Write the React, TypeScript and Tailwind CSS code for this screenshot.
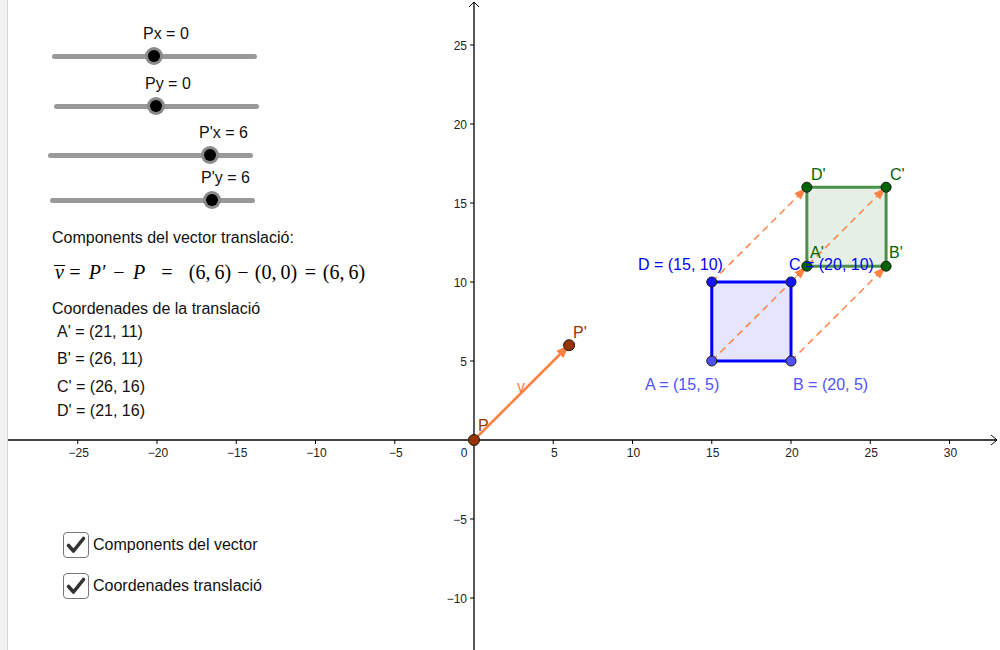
import React from 'react';

// graph coordinates -> page pixels
const OX = 474;
const OY = 440;
const SX = 15.85;
const SY = 15.8;
const X = (u: number) => OX + u * SX;
const Y = (v: number) => OY - v * SY;

const ORANGE = '#ff8244';
const LABEL_FONT = 'Liberation Sans, Arial, sans-serif';

type Pt = [number, number];

function Arrow({ from, to, dashed, width }: { from: Pt; to: Pt; dashed?: boolean; width: number }) {
  const x1 = X(from[0]);
  const y1 = Y(from[1]);
  const x2 = X(to[0]);
  const y2 = Y(to[1]);
  const len = Math.hypot(x2 - x1, y2 - y1);
  const dx = (x2 - x1) / len;
  const dy = (y2 - y1) / len;
  const L = 13;
  const W = dashed ? 4.5 : 5;
  const bx = x2 - dx * L;
  const by = y2 - dy * L;
  const head = `${x2},${y2} ${bx - dy * W},${by + dx * W} ${bx + dy * W},${by - dx * W}`;
  return (
    <g>
      <line
        x1={x1}
        y1={y1}
        x2={bx + dx * 2}
        y2={by + dy * 2}
        stroke={ORANGE}
        strokeWidth={width}
        strokeDasharray={dashed ? '7 5' : undefined}
      />
      <polygon points={head} fill={ORANGE} />
    </g>
  );
}

function Dot({ p, fill, r = 5 }: { p: Pt; fill: string; r?: number }) {
  return <circle cx={X(p[0])} cy={Y(p[1])} r={r} fill={fill} stroke="#1a1a1a" strokeWidth={1} />;
}

function Graph() {
  const xTicks = [-25, -20, -15, -10, -5, 5, 10, 15, 20, 25, 30];
  const yTicks = [-10, -5, 5, 10, 15, 20, 25];
  const A: Pt = [15, 5];
  const B: Pt = [20, 5];
  const C: Pt = [20, 10];
  const D: Pt = [15, 10];
  const A2: Pt = [21, 11];
  const B2: Pt = [26, 11];
  const C2: Pt = [26, 16];
  const D2: Pt = [21, 16];
  const poly = (ps: Pt[]) => ps.map((p) => `${X(p[0])},${Y(p[1])}`).join(' ');

  return (
    <svg className="absolute inset-0" width={992} height={650} viewBox="8 0 992 650">
      {/* axes */}
      <line x1={8} y1={OY} x2={997} y2={OY} stroke="#000" strokeWidth={1.3} />
      <polyline points="991,435 997,440 991,445" fill="none" stroke="#000" strokeWidth={1} />
      <line x1={OX} y1={650} x2={OX} y2={2} stroke="#000" strokeWidth={1.3} />
      <polyline points="469,7 474,2 479,7" fill="none" stroke="#000" strokeWidth={1} />

      {xTicks.map((t) => (
        <g key={'x' + t}>
          <line x1={X(t)} y1={OY} x2={X(t)} y2={OY + 4} stroke="#000" strokeWidth={1} />
          <text x={X(t) + 1} y={457} fontSize={12} fill="#222" textAnchor="middle" fontFamily={LABEL_FONT}>
            {t < 0 ? '\u2212' + Math.abs(t) : t}
          </text>
        </g>
      ))}
      {yTicks.map((t) => (
        <g key={'y' + t}>
          <line x1={OX - 4} y1={Y(t)} x2={OX} y2={Y(t)} stroke="#000" strokeWidth={1} />
          <text x={467} y={Y(t) + 4.5} fontSize={12} fill="#222" textAnchor="end" fontFamily={LABEL_FONT}>
            {t < 0 ? '\u2212' + Math.abs(t) : t}
          </text>
        </g>
      ))}
      <text x={464} y={457} fontSize={12} fill="#222" textAnchor="middle" fontFamily={LABEL_FONT}>
        0
      </text>

      {/* squares */}
      <polygon points={poly([A, B, C, D])} fill="rgba(0,0,255,0.1)" stroke="#0000ff" strokeWidth={3} />
      <polygon points={poly([A2, B2, C2, D2])} fill="rgba(0,100,0,0.1)" stroke="#4b914b" strokeWidth={3} />

      {/* translation vectors */}
      <Arrow from={A} to={A2} dashed width={1.5} />
      <Arrow from={B} to={B2} dashed width={1.5} />
      <Arrow from={C} to={C2} dashed width={1.5} />
      <Arrow from={D} to={D2} dashed width={1.5} />
      <Arrow from={[0, 0]} to={[6, 6]} width={2.6} />

      {/* points */}
      <Dot p={A} fill="#5050ff" />
      <Dot p={B} fill="#5050ff" />
      <Dot p={C} fill="#1515ff" />
      <Dot p={D} fill="#1515ff" />
      <Dot p={A2} fill="#006400" />
      <Dot p={B2} fill="#006400" />
      <Dot p={C2} fill="#006400" />
      <Dot p={D2} fill="#006400" />
      <Dot p={[0, 0]} fill="#993300" r={5.5} />
      <Dot p={[6, 6]} fill="#993300" r={5.5} />

      {/* labels */}
      <g fontSize={16} fontFamily={LABEL_FONT}>
        <text x={478} y={431} fill="#993300">P</text>
        <text x={573} y={338} fill="#993300">P'</text>
        <text x={517} y={392} fill={ORANGE}>v</text>
        <text x={638} y={270} fill="#0000ff">D = (15, 10)</text>
        <text x={789} y={270} fill="#0000ff">C = (20, 10)</text>
        <text x={645} y={390} fill="#5050ff">A = (15, 5)</text>
        <text x={793} y={390} fill="#5050ff">B = (20, 5)</text>
        <text x={811} y={180} fill="#006400">D'</text>
        <text x={890} y={180} fill="#006400">C'</text>
        <text x={810} y={258} fill="#006400">A'</text>
        <text x={889} y={258} fill="#006400">B'</text>
      </g>
    </svg>
  );
}

const sliders = [
  { label: 'Px = 0', row: 'mt-[25px] ml-[44px]', text: 'pl-[91px]', knob: 102 },
  { label: 'Py = 0', row: 'mt-[10px] ml-[46px]', text: 'pl-[91px]', knob: 102 },
  { label: "P'x = 6", row: 'mt-[9px] ml-[40px]', text: 'pl-[151px]', knob: 162 },
  { label: "P'y = 6", row: 'mt-[5px] ml-[42px]', text: 'pl-[151px]', knob: 162 },
];

function Slider({ label, row, text, knob }: (typeof sliders)[number]) {
  return (
    <div className={`w-[205px] ${row}`}>
      <div className={`h-[18px] leading-[18px] whitespace-nowrap ${text}`}>{label}</div>
      <div className="relative mt-[4px] h-[18px] flex items-center">
        <div className="h-[5px] w-full rounded-full bg-[#999999]" />
        <div
          className="absolute top-0 w-[18px] h-[18px] -ml-[9px] rounded-full bg-[#8a8a8a] flex items-center justify-center"
          style={{ left: knob }}
        >
          <div className="w-[12px] h-[12px] rounded-full bg-black" />
        </div>
      </div>
    </div>
  );
}

const formula = [
  { t: '=', w: 'w-[20px]', cls: '' },
  { t: 'P\u2032', w: 'w-[24px]', cls: 'italic' },
  { t: '\u2212', w: 'w-[20px]', cls: '' },
  { t: 'P', w: 'w-[20px]', cls: 'italic' },
  { t: '=', w: 'w-[36px]', cls: '' },
  { t: '(6,\u20096)', w: 'w-[50px]', cls: '' },
  { t: '\u2212', w: 'w-[16px]', cls: '' },
  { t: '(0,\u20090)', w: 'w-[50px]', cls: '' },
  { t: '=', w: 'w-[19px]', cls: '' },
  { t: '(6,\u20096)', w: 'w-[48px]', cls: '' },
];

const coords = [
  { t: "A' = (21, 11)", mt: 'mt-[5px]' },
  { t: "B' = (26, 11)", mt: 'mt-[9px]' },
  { t: "C' = (26, 16)", mt: 'mt-[10px]' },
  { t: "D' = (21, 16)", mt: 'mt-[6px]' },
];

function Check({ label, mt }: { label: string; mt: string }) {
  return (
    <div className={`flex items-center h-[26px] ml-[55px] ${mt}`}>
      <div className="w-[26px] h-[26px] rounded-[4px] border-[1.5px] border-[#777777] bg-white flex items-center justify-center">
        <svg width="22" height="22" viewBox="0 0 22 22">
          <path d="M3.5 11.5 L8.5 17 L18.5 4.5" fill="none" stroke="#333" strokeWidth={3.6} strokeLinecap="round" strokeLinejoin="round" />
        </svg>
      </div>
      <span className="ml-[4px] leading-[18px] whitespace-nowrap">{label}</span>
    </div>
  );
}

export default function App() {
  return (
    <div className="flex w-[1000px] h-[650px] overflow-hidden bg-white text-[16px] text-[#111] font-['Liberation_Sans',Arial,sans-serif]">
      <div className="w-[8px] shrink-0 bg-[#f2f2f2] border-r border-[#d6d6d6]" />
      <div className="relative flex-1 h-full">
        <Graph />
        <div className="relative flex flex-col items-start">
          {sliders.map((s) => (
            <Slider key={s.label} {...s} />
          ))}

          <div className="mt-[20px] ml-[44px] h-[18px] leading-[18px] whitespace-nowrap">
            Components del vector translació:
          </div>

          <div className="mt-[13px] ml-[46px] h-[24px] flex items-center font-['Liberation_Serif','Times_New_Roman',serif] text-[20px] text-black">
            <span className="w-[11px] shrink-0 flex justify-center">
              <span className="inline-block italic border-t border-black leading-[13px] px-[1px]">v</span>
            </span>
            {formula.map((f, i) => (
              <span key={i} className={`${f.w} shrink-0 text-center whitespace-nowrap ${f.cls}`}>
                {f.t}
              </span>
            ))}
          </div>

          <div className="mt-[16px] ml-[44px] h-[18px] leading-[18px] whitespace-nowrap">
            Coordenades de la translació
          </div>
          {coords.map((c) => (
            <div key={c.t} className={`ml-[49px] h-[18px] leading-[18px] whitespace-nowrap ${c.mt}`}>
              {c.t}
            </div>
          ))}

          <Check label="Components del vector" mt="mt-[112px]" />
          <Check label="Coordenades translació" mt="mt-[15px]" />
        </div>
      </div>
    </div>
  );
}
